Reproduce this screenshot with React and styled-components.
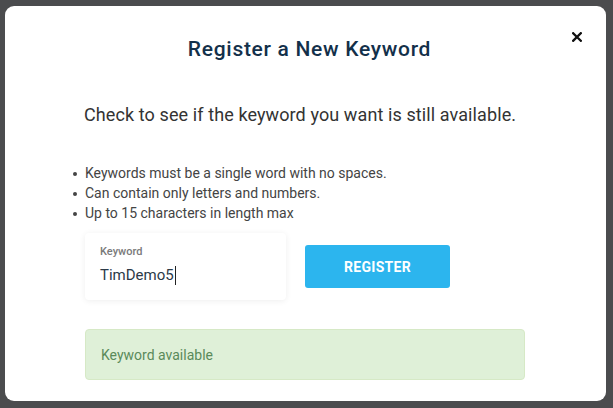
import React from "react";
import styled, { createGlobalStyle } from "styled-components";

const Global = createGlobalStyle`
  html, body { margin: 0; padding: 0; }
  body {
    background: #4b4c4e;
    font-family: Roboto, "Liberation Sans", Arial, sans-serif;
    width: 613px;
    height: 408px;
    overflow: hidden;
  }
`;

const Backdrop = styled.div`
  width: 613px;
  height: 408px;
  box-sizing: border-box;
  padding: 6px 7px 7px 5px;
`;

const Modal = styled.div`
  position: relative;
  height: 100%;
  background: #fff;
  border-radius: 9px;
  box-sizing: border-box;
  padding: 30px 80px 0 80px;
  display: flex;
  flex-direction: column;
`;

const Close = styled.button`
  position: absolute;
  top: 25px;
  right: 23px;
  border: 0;
  background: transparent;
  padding: 0;
  width: 12px;
  height: 12px;
  display: flex;
  align-items: center;
  justify-content: center;
  cursor: pointer;
`;

const Title = styled.h2`
  margin: 0;
  padding-left: 8px;
  text-align: center;
  font-size: 21px;
  font-weight: 500;
  letter-spacing: 0.7px;
  color: #13304a;
  line-height: 26px;
`;

const Subtitle = styled.p`
  margin: 42px 0 0 -1px;
  white-space: nowrap;
  font-size: 18px;
  letter-spacing: 0.1px;
  color: #333;
  line-height: 22px;
`;

const Rules = styled.ul`
  margin: 37px 0 0 0;
  padding: 0;
  list-style: none;
`;

const Rule = styled.li`
  position: relative;
  font-size: 14px;
  line-height: 20px;
  color: #444;
  &::before {
    content: "";
    position: absolute;
    left: -12px;
    top: 9px;
    width: 4px;
    height: 4px;
    border-radius: 50%;
    background: #444;
  }
`;

const FormRow = styled.div`
  margin-top: 10px;
  display: flex;
  align-items: center;
  gap: 19px;
`;

const Field = styled.label`
  width: 201px;
  height: 67px;
  box-sizing: border-box;
  padding: 12px 15px 0;
  background: #fff;
  border-radius: 4px;
  box-shadow: 0 1px 6px rgba(0, 0, 0, 0.07);
  display: flex;
  flex-direction: column;
`;

const FieldLabel = styled.span`
  font-size: 11px;
  font-weight: 500;
  color: #7a7a7a;
  line-height: 13px;
`;

const FieldValue = styled.span`
  margin-top: 7px;
  font-size: 15px;
  color: #2b3a48;
  line-height: 20px;
  display: flex;
  align-items: center;
`;

const Caret = styled.span`
  display: inline-block;
  width: 1px;
  height: 19px;
  background: #222;
  margin-left: 1px;
`;

const RegisterButton = styled.button`
  width: 145px;
  height: 43px;
  border: 0;
  border-radius: 3px;
  background: #2cb5ee;
  color: #fff;
  font-family: inherit;
  font-size: 14px;
  font-weight: 700;
  letter-spacing: 0.3px;
  cursor: pointer;
`;

const Alert = styled.div`
  margin-top: 29px;
  width: 440px;
  height: 51px;
  box-sizing: border-box;
  padding: 0 15px;
  background: #dff0d8;
  border: 1px solid #d6e9c6;
  border-radius: 4px;
  display: flex;
  align-items: center;
  font-size: 14px;
  color: #5a8a5a;
`;

export default function App() {
  return (
    <>
      <Global />
      <Backdrop>
        <Modal>
          <Close aria-label="Close">
            <svg width="10" height="10" viewBox="0 0 10 10">
              <path d="M1.2 1.2 L8.8 8.8 M8.8 1.2 L1.2 8.8" stroke="#111" strokeWidth="2.3" strokeLinecap="square" />
            </svg>
          </Close>
          <Title>Register a New Keyword</Title>
          <Subtitle>Check to see if the keyword you want is still available.</Subtitle>
          <Rules>
            <Rule>Keywords must be a single word with no spaces.</Rule>
            <Rule>Can contain only letters and numbers.</Rule>
            <Rule>Up to 15 characters in length max</Rule>
          </Rules>
          <FormRow>
            <Field>
              <FieldLabel>Keyword</FieldLabel>
              <FieldValue>
                TimDemo5
                <Caret />
              </FieldValue>
            </Field>
            <RegisterButton>REGISTER</RegisterButton>
          </FormRow>
          <Alert>Keyword available</Alert>
        </Modal>
      </Backdrop>
    </>
  );
}
